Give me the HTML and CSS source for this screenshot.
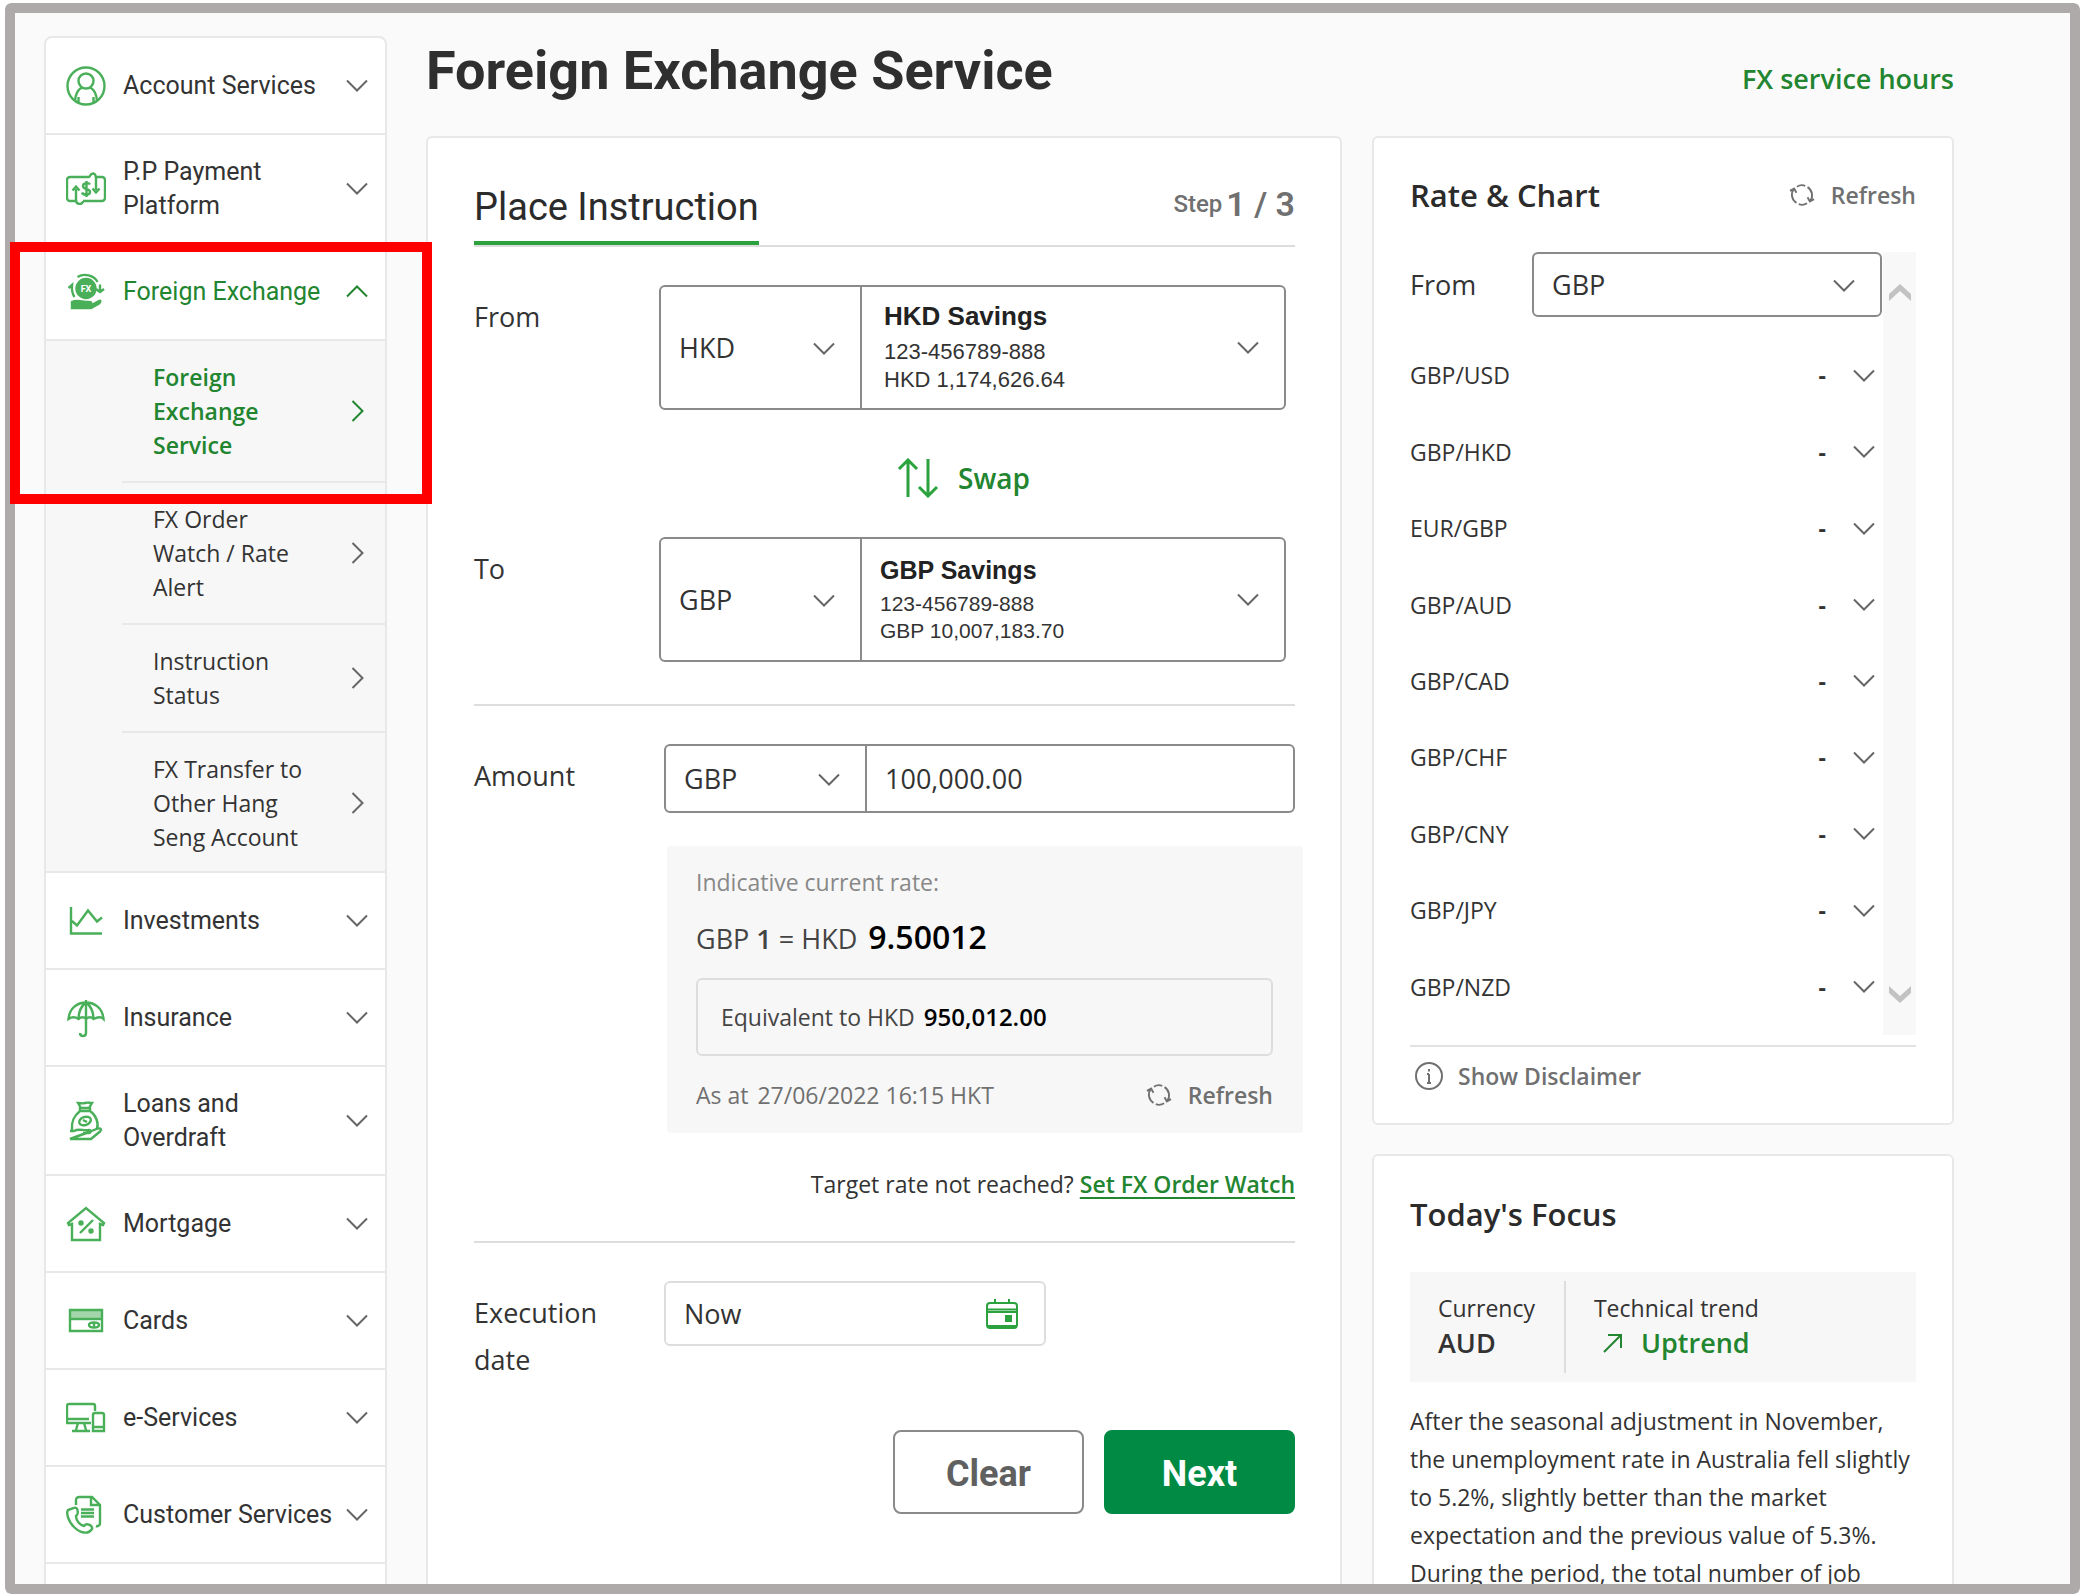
FILE: index.html
```html
<!DOCTYPE html>
<html lang="en">
<head>
<meta charset="utf-8">
<meta name="viewport" content="width=device-width, initial-scale=1">
<title>Foreign Exchange Service</title>
<link rel="stylesheet" href="styles.css">
</head>
<body>
<svg class="sprite" aria-hidden="true">
  <symbol id="down" viewBox="0 0 22 13"><path d="M1 1.5 11 11.5 21 1.5"/></symbol>
  <symbol id="up" viewBox="0 0 22 13"><path d="M1 11.5 11 1.5 21 11.5"/></symbol>
  <symbol id="right" viewBox="0 0 13 22"><path d="M1.500 1 11.500 11 1.500 21"/></symbol>
  <symbol id="refresh" viewBox="0 0 28 26"><path d="M8 21.500A10.500 10.500 0 0 1 5 6.500M8.500 4A10.500 10.500 0 0 1 17.500 3M20 4.500A10.500 10.500 0 0 1 23 19.500M19.500 22A10.500 10.500 0 0 1 10.500 23M1 8.500 5.500 6 8 10.500M27 17.500 22.500 20 20 15.500"/></symbol>
</svg>
<div class="frame">
  <nav class="sidebar" aria-label="Banking services">
    <ul class="menu">
      <li class="menu-item"><a class="menu-link" href="#account">
        <svg class="icon" viewBox="0 0 40 40"><circle cx="20" cy="20" r="18.500"/><circle cx="20" cy="15" r="7.500"/><path d="M9 35C9.500 28 12 23.500 16 21.500M31 35C30.500 28 28 23.500 24 21.500M12.500 37v-6M27.500 37v-6"/></svg>
        <span class="menu-text">Account Services</span><svg class="chev"><use href="#down"/></svg></a></li>
      <li class="menu-item tall"><a class="menu-link" href="#payment">
        <svg class="icon" viewBox="0 0 40 40"><path d="M10 32H4a3 3 0 0 1-3-3V11a3 3 0 0 1 3-3h19c1 0 1-3.500 4-3.500S30 8 30 10v11M17 32h19a3 3 0 0 0 3-3V11a3 3 0 0 0-3-3h-5M10 20v11c0 5 7 5 7 1M6.500 21.500 10 17.500l3.500 4M26.500 19.500 30 23.500l3.500-4M24 15.500c-1-2-7-2-7 1.500 0 4 7 2 7 6 0 3.500-7 3.500-8 .500M20.500 12v16"/></svg>
        <span class="menu-text">P.P Payment Platform</span><svg class="chev"><use href="#down"/></svg></a></li>
      <li class="menu-item group">
        <a class="menu-link active" href="#fx" aria-expanded="true">
        <svg class="icon" viewBox="0 0 40 40"><circle class="solid" cx="20" cy="16.500" r="9.500"/><path d="M11.500 5C18 1 28 3 31.500 10M34 12.500v6M2.500 16 6 13c-.500 4 0 8 2.500 12M30 17l4 3 4-3"/><path class="solid" d="M6 30c5-2.500 10 0 17 0 3 0 3 2 0 2.500l-6 .500 7 1 9-5c2-1 1.500 1 0 2.500L25 36H6z"/><text class="fx-mark" x="20" y="20">FX</text></svg>
        <span class="menu-text">Foreign Exchange</span><svg class="chev"><use href="#up"/></svg></a>
        <ul class="submenu">
          <li><a class="sub-link active" href="#fx-service" aria-current="page"><span>Foreign Exchange Service</span><svg class="chev-r"><use href="#right"/></svg></a></li>
          <li><a class="sub-link" href="#fx-watch"><span>FX Order Watch / Rate Alert</span><svg class="chev-r"><use href="#right"/></svg></a></li>
          <li><a class="sub-link" href="#fx-status"><span>Instruction Status</span><svg class="chev-r"><use href="#right"/></svg></a></li>
          <li><a class="sub-link" href="#fx-transfer"><span>FX Transfer to Other Hang Seng Account</span><svg class="chev-r"><use href="#right"/></svg></a></li>
        </ul>
        <span class="highlight" aria-hidden="true"></span>
      </li>
      <li class="menu-item"><a class="menu-link" href="#investments">
        <svg class="icon" viewBox="0 0 40 40"><path d="M5 6v26.500h31M6 20l5 4.500L22 9.500l9 11 5-4"/></svg>
        <span class="menu-text">Investments</span><svg class="chev"><use href="#down"/></svg></a></li>
      <li class="menu-item"><a class="menu-link" href="#insurance">
        <svg class="icon" viewBox="0 0 40 40"><path d="M2.500 21C4 -1 36 -1 37.500 21c-2-2-6-2-10 0-2-2-5-2-7.500 0-2-2-5-2-7.500 0-3-2-7-2-10 0zM12.500 21c0-7 3-13 7.500-17 4.500 4 7.500 10 7.500 17M20 2v33c0 4-6 4-6 0"/></svg>
        <span class="menu-text">Insurance</span><svg class="chev"><use href="#down"/></svg></a></li>
      <li class="menu-item tall"><a class="menu-link" href="#loans">
        <svg class="icon" viewBox="0 0 40 40"><path d="M15 7l-3-5c3 0 4 1 7 0s4 0 7 0l-3 5M14 7h10v3H14zM14 10C8 15 5 20 6 29M24 10c6 4 9 12 7 18M4 30h4c5-3 9 0 15-1 2 0 2 3 0 3h-6M23 31l9-3.500c3-.500 4 1 2 3L25 38H4z"/><ellipse cx="19" cy="20" rx="6" ry="4" transform="rotate(-20 19 20)"/><path d="M17 19l4 2"/></svg>
        <span class="menu-text">Loans and Overdraft</span><svg class="chev"><use href="#down"/></svg></a></li>
      <li class="menu-item"><a class="menu-link" href="#mortgage">
        <svg class="icon" viewBox="0 0 40 40"><path d="M6 20v16h28V20l3 1 1-2L20 4 2 19l1 2zM14 29l13-13"/><circle class="solid" cx="15" cy="19" r="1.500"/><circle class="solid" cx="25" cy="27" r="1.500"/></svg>
        <span class="menu-text">Mortgage</span><svg class="chev"><use href="#down"/></svg></a></li>
      <li class="menu-item"><a class="menu-link" href="#cards">
        <svg class="icon" viewBox="0 0 40 40"><path d="M4 9h32v21H4z"/><path class="pale" d="M5 10h30v7H5z"/><path d="M5 18h30"/><ellipse cx="28" cy="24" rx="5" ry="2.500"/><path d="M28 22v4"/></svg>
        <span class="menu-text">Cards</span><svg class="chev"><use href="#down"/></svg></a></li>
      <li class="menu-item"><a class="menu-link" href="#eservices">
        <svg class="icon" viewBox="0 0 40 40"><path d="M29 13V8a2 2 0 0 0-2-2H3a2 2 0 0 0-2 2v17h24M1 21h22M12 25l-2 7M18 25l2 7M6 33h18M29 15h7a2 2 0 0 1 2 2v16H27V17a2 2 0 0 1 2-2zM27 29h11"/></svg>
        <span class="menu-text">e-Services</span><svg class="chev"><use href="#down"/></svg></a></li>
      <li class="menu-item"><a class="menu-link" href="#customer">
        <svg class="icon" viewBox="0 0 40 40"><path d="M10 10V5a3 3 0 0 1 3-3h13l8 8v18a3 3 0 0 1-4 3M25 2v8h8M15 14.500h13M15 18h13M15 21.500h13M8 13c4-2 5 6 2 8 0 5 4 9 8 10 3-4 9 0 8 3-4 6-12 4-18-2C2 26 0 18 2 15z"/></svg>
        <span class="menu-text">Customer Services</span><svg class="chev"><use href="#down"/></svg></a></li>
    </ul>
  </nav>

  <div class="content">
    <header class="page-head">
      <h1>Foreign Exchange Service</h1>
      <a class="hours" href="#hours">FX service hours</a>
    </header>
    <div class="columns">
      <main class="card order">
        <div class="tabs">
          <h2 class="tab">Place Instruction</h2>
          <p class="step">Step <strong>1 / 3</strong></p>
        </div>

        <div class="row account">
          <label class="label" for="from-cur">From</label>
          <div class="combo">
            <div class="pick"><select id="from-cur"><option>HKD</option><option>GBP</option></select><svg class="chev"><use href="#down"/></svg></div>
            <button class="acct" type="button" aria-haspopup="listbox">
              <span class="acct-text"><b>HKD Savings</b><span>123-456789-888</span><span>HKD 1,174,626.64</span></span>
              <svg class="chev"><use href="#down"/></svg>
            </button>
          </div>
        </div>

        <button class="swap" type="button">
          <svg viewBox="0 0 42 40"><path d="M11 39V2M2 11l9-9 9 9M31 1v37M22 29l9 9 9-9"/></svg>Swap
        </button>

        <div class="row account">
          <label class="label" for="to-cur">To</label>
          <div class="combo">
            <div class="pick"><select id="to-cur"><option>GBP</option><option>HKD</option></select><svg class="chev"><use href="#down"/></svg></div>
            <button class="acct compact" type="button" aria-haspopup="listbox">
              <span class="acct-text"><b>GBP Savings</b><span>123-456789-888</span><span>GBP 10,007,183.70</span></span>
              <svg class="chev"><use href="#down"/></svg>
            </button>
          </div>
        </div>

        <hr>

        <div class="row">
          <label class="label" for="amount">Amount</label>
          <div class="combo amount">
            <div class="pick"><select aria-label="Amount currency"><option>GBP</option><option>HKD</option></select><svg class="chev"><use href="#down"/></svg></div>
            <input id="amount" type="text" inputmode="decimal" value="100,000.00">
          </div>
        </div>

        <section class="rate">
          <p class="rate-title">Indicative current rate:</p>
          <p class="rate-line">GBP <span class="unit">1</span> = HKD <span class="rate-value">9.50012</span></p>
          <p class="equiv">Equivalent to HKD <span class="equiv-value">950,012.00</span></p>
          <div class="rate-foot">
            <p>As at <time datetime="2022-06-27T16:15">27/06/2022 16:15 HKT</time></p>
            <button class="refresh" type="button"><svg><use href="#refresh"/></svg>Refresh</button>
          </div>
        </section>

        <p class="target">Target rate not reached? <a href="#watch">Set FX Order Watch</a></p>

        <hr>

        <div class="row">
          <label class="label" for="date">Execution date</label>
          <div class="date">
            <input id="date" type="text" value="Now">
            <svg viewBox="0 0 32 30"><rect x="1" y="4" width="30" height="25" rx="3"/><path d="M2 10.500h28M2 13h28M9 0v5M23 0v5M2 27h28"/><rect class="solid" x="20" y="17" width="5" height="5"/></svg>
          </div>
        </div>

        <div class="actions">
          <button class="btn" type="button">Clear</button>
          <button class="btn primary" type="submit">Next</button>
        </div>
      </main>

      <aside class="side">
        <section class="card chart">
          <div class="card-head">
            <h2>Rate &amp; Chart</h2>
            <button class="refresh" type="button"><svg><use href="#refresh"/></svg>Refresh</button>
          </div>
          <div class="scroller">
            <div class="scroll-body">
              <div class="from">
                <label for="base">From</label>
                <div class="pick boxed"><select id="base"><option>GBP</option><option>HKD</option></select><svg class="chev"><use href="#down"/></svg></div>
              </div>
              <table class="pairs">
                <tr><th scope="row">GBP/USD</th><td>-</td><td class="more"><button type="button" aria-label="Show GBP/USD"><svg class="chev"><use href="#down"/></svg></button></td></tr>
                <tr><th scope="row">GBP/HKD</th><td>-</td><td class="more"><button type="button" aria-label="Show GBP/HKD"><svg class="chev"><use href="#down"/></svg></button></td></tr>
                <tr><th scope="row">EUR/GBP</th><td>-</td><td class="more"><button type="button" aria-label="Show EUR/GBP"><svg class="chev"><use href="#down"/></svg></button></td></tr>
                <tr><th scope="row">GBP/AUD</th><td>-</td><td class="more"><button type="button" aria-label="Show GBP/AUD"><svg class="chev"><use href="#down"/></svg></button></td></tr>
                <tr><th scope="row">GBP/CAD</th><td>-</td><td class="more"><button type="button" aria-label="Show GBP/CAD"><svg class="chev"><use href="#down"/></svg></button></td></tr>
                <tr><th scope="row">GBP/CHF</th><td>-</td><td class="more"><button type="button" aria-label="Show GBP/CHF"><svg class="chev"><use href="#down"/></svg></button></td></tr>
                <tr><th scope="row">GBP/CNY</th><td>-</td><td class="more"><button type="button" aria-label="Show GBP/CNY"><svg class="chev"><use href="#down"/></svg></button></td></tr>
                <tr><th scope="row">GBP/JPY</th><td>-</td><td class="more"><button type="button" aria-label="Show GBP/JPY"><svg class="chev"><use href="#down"/></svg></button></td></tr>
                <tr><th scope="row">GBP/NZD</th><td>-</td><td class="more"><button type="button" aria-label="Show GBP/NZD"><svg class="chev"><use href="#down"/></svg></button></td></tr>
              </table>
            </div>
            <div class="track" aria-hidden="true">
              <svg viewBox="0 0 22 18"><path d="M0 17v-7L11 0l11 10v7L11 7z"/></svg>
              <svg viewBox="0 0 22 18"><path d="M0 1v7l11 10L22 8V1L11 11z"/></svg>
            </div>
          </div>
          <button class="disclaimer" type="button">
            <svg viewBox="0 0 28 28"><circle cx="14" cy="14" r="13"/><path d="M14 12v9M12 12h2M12 21h4M14 7v2.500"/></svg>Show Disclaimer
          </button>
        </section>

        <section class="card focus">
          <h2>Today's Focus</h2>
          <dl class="facts">
            <div><dt>Currency</dt><dd>AUD</dd></div>
            <div><dt>Technical trend</dt><dd class="up"><svg viewBox="0 0 20 20"><path d="M1 19 18 2M5 2h13v13"/></svg>Uptrend</dd></div>
          </dl>
          <p>After the seasonal adjustment in November, the unemployment rate in Australia fell slightly to 5.2%, slightly better than the market expectation and the previous value of 5.3%. During the period, the total number of job</p>
        </section>
      </aside>
    </div>
  </div>
</div>
</body>
</html>
```
FILE: styles.css
```css
:root {
  --ink: #333;
  --muted: #707070;
  --green: #22852f;
  --bright: #2ba23d;
  --line: #e8e8e8;
  --field: #8a8a8a;
  --body: "Open Sans", "Noto Sans", sans-serif;
  --display: Roboto, "Liberation Sans", sans-serif;
}

* { box-sizing: border-box; }

body {
  margin: 0;
  padding: 3px 0 1px 5px;
  height: 100vh;
  background: #fff;
  color: var(--ink);
  font: 23px/32px var(--body);
  overflow: hidden;
}

h1, h2, p, ul, dl, dd { margin: 0; padding: 0; }
h2 { font-size: 31px; font-weight: 600; line-height: 40px; color: #2b2b2b; }
ul { list-style: none; }
a { color: inherit; text-decoration: none; }
button, select, input { font: inherit; color: inherit; background: none; border: 0; margin: 0; padding: 0; border-radius: 0; text-align: left; }
button { cursor: pointer; }
svg { fill: none; stroke: currentColor; stroke-width: 2; flex: none; }
hr { margin: 0; border: 0; border-top: 2px solid #ddd; }
.sprite { position: absolute; width: 0; height: 0; }
.chev { width: 22px; height: 13px; color: #666; }
.chev-r { width: 13px; height: 22px; color: #666; }
.solid { fill: currentColor; }

.frame {
  position: relative;
  display: flex;
  gap: 39px;
  height: 100%;
  border-radius: 6px;
  background: #fafafa;
  padding: 33px 126px 0 39px;
  overflow: hidden;
}
/* The border lies over the content so that the highlight can cross it */
.frame::after {
  content: "";
  position: absolute;
  inset: 0;
  z-index: 1;
  border: 10px solid #aeaaaa;
  border-radius: 6px;
  pointer-events: none;
}

/* Sidebar */
.sidebar {
  flex: none;
  width: 343px;
  min-height: 1800px;
  border: 2px solid var(--line);
  border-radius: 8px;
  background: #fff;
}
.menu-item { border-bottom: 2px solid var(--line); }
.menu-link {
  display: flex;
  align-items: center;
  min-height: 95px;
  padding: 0 17px 0 20px;
  font: 25px/34px var(--display);
}
.tall .menu-link { min-height: 107px; }
.menu-text { flex: 1; margin-left: 17px; }
.tall .menu-text { padding-right: 60px; }
.icon { width: 40px; height: 40px; color: var(--bright); opacity: .85; stroke-width: 2.4; }
.pale { fill: currentColor; opacity: .5; stroke: none; }
.fx-mark { fill: #fff; stroke: none; font: 700 9px var(--display); text-anchor: middle; }
.active, .active .chev, .active .chev-r { color: var(--green); }
.group { position: relative; }
.submenu { border-top: 2px solid var(--line); background: #f7f7f7; padding-left: 76px; }
.submenu li + li { border-top: 2px solid var(--line); }
.sub-link {
  display: flex;
  align-items: center;
  justify-content: space-between;
  padding: 19px 21px 19px 31px;
  line-height: 34px;
}
.submenu li:last-child .sub-link { padding-bottom: 17px; }
.sub-link span { width: 160px; }
.sub-link.active { font-weight: 600; }
.highlight {
  position: absolute;
  z-index: 2;
  top: -2px;
  left: -36px;
  right: -47px;
  height: 262px;
  border: 10px solid #f00;
  pointer-events: none;
}

/* Page heading */
.content { flex: 1; min-width: 0; padding-top: 3px; }
.page-head { display: flex; justify-content: space-between; align-items: baseline; margin-bottom: 33px; }
h1 { font: 700 54px/64px var(--display); color: #2f2f2f; }
.hours { font-size: 27px; font-weight: 600; color: var(--green); }

.columns { display: grid; grid-template-columns: minmax(0, 1fr) 582px; gap: 30px; }
.card { border: 2px solid var(--line); border-radius: 6px; background: #fff; }

/* Order form */
.order { padding: 45px 45px 200px 46px; }
.tabs { display: flex; justify-content: space-between; border-bottom: 2px solid #ddd; margin-bottom: 38px; }
.tab { font: 400 38px/48px var(--display); padding-bottom: 10px; border-bottom: 4px solid var(--bright); }
.step { display: flex; align-items: center; gap: 4px; height: 42px; font: 500 24px/40px var(--display); color: var(--muted); }
.step strong { font-size: 34px; font-weight: 600; }
.row { display: grid; grid-template-columns: 190px minmax(0, 1fr); font-size: 27px; }
.account { grid-template-columns: 185px minmax(0, 1fr); padding-right: 9px; }
.label { padding-top: 8px; line-height: 47px; }
.row .label { width: 140px; }
.combo { display: flex; height: 125px; border: 2px solid var(--field); border-radius: 6px; }
.combo.amount { height: 69px; }
.combo input { flex: 1; min-width: 0; padding-left: 18px; }
.pick { position: relative; width: 201px; flex: none; border-right: 2px solid var(--field); }
.pick select { appearance: none; width: 100%; height: 100%; padding-left: 18px; }
.pick .chev { position: absolute; right: 25px; top: 50%; margin-top: -6px; pointer-events: none; }
.acct { display: flex; flex: 1; align-items: center; justify-content: space-between; padding: 0 25px 0 22px; font: 22px/28px "Liberation Sans", Arial, sans-serif; }
.acct-text { display: flex; flex-direction: column; padding-bottom: 4px; }
.acct b { margin-bottom: 4px; font-size: 26px; line-height: 36px; color: #222; }
.acct.compact { padding-left: 18px; font-size: 21px; line-height: 27px; }
.acct.compact b { margin-bottom: 2px; font-size: 25px; }
.swap { display: flex; align-items: center; gap: 19px; margin: 48px auto 39px 423px; height: 40px; font-size: 28px; font-weight: 600; color: var(--green); }
.swap svg { width: 42px; height: 40px; color: var(--bright); stroke-width: 3; }
.account + hr { margin: 42px 0 38px; }

.rate { margin: 33px -8px 35px 193px; padding: 20px 30px 22px 29px; border-radius: 4px; background: #f7f7f7; }
.rate-title { color: #888; }
.rate-line { margin-top: 18px; font-size: 27px; line-height: 46px; color: #444; }
.unit { font-weight: 600; }
.rate-value { margin-left: 4px; font-size: 32px; font-weight: 600; line-height: 32px; color: #000; }
.equiv { display: flex; align-items: center; height: 78px; margin: 16px 0 23px; padding-left: 23px; border: 2px solid #ddd; border-radius: 6px; color: #444; white-space: pre; }
.equiv-value { margin-left: 3px; font-size: 24px; font-weight: 600; color: #000; }
.rate-foot { display: flex; justify-content: space-between; color: var(--muted); }
.rate-foot time { margin-left: 3px; }
.refresh { display: flex; align-items: center; gap: 16px; font-weight: 600; color: var(--muted); }
.refresh svg { width: 26px; height: 24px; }
.target { margin-bottom: 41px; text-align: right; }
.target a { color: var(--green); font-weight: 600; text-decoration: underline; text-underline-offset: 4px; text-decoration-thickness: 2px; }
.target + hr { margin-bottom: 38px; }
.date { display: flex; align-items: center; justify-content: space-between; width: 382px; height: 65px; padding: 0 26px 0 18px; border: 2px solid #ddd; border-radius: 6px; }
.date input { width: 200px; height: 100%; }
.date svg { width: 32px; height: 30px; color: var(--bright); }
.actions { display: flex; justify-content: flex-end; gap: 20px; margin-top: 47px; }
.btn { width: 191px; height: 84px; padding-top: 4px; border: 2px solid var(--field); border-radius: 8px; font: 700 36px/44px var(--display); text-align: center; color: #606060; }
.btn.primary { background: #008a43; border-color: #008a43; color: #fff; }

/* Right column */
.side { display: flex; flex-direction: column; gap: 29px; }
.chart { padding: 37px 36px 31px; }
.card-head { display: flex; justify-content: space-between; align-items: center; margin-bottom: 37px; }
.scroller { display: flex; gap: 1px; padding-bottom: 10px; border-bottom: 2px solid #e2e2e2; margin-bottom: 13px; }
.scroll-body { flex: 1; padding-bottom: 10px; }
.from { display: flex; align-items: center; justify-content: space-between; font-size: 27px; margin-bottom: 20px; }
.boxed { width: 350px; height: 65px; border: 2px solid var(--field); border-radius: 6px; }
.track { display: flex; flex-direction: column; justify-content: space-between; align-items: center; width: 33px; padding: 32px 0; background: #f8f8f8; }
.track svg { width: 22px; height: 18px; fill: #c2c2c2; stroke: none; }
.pairs { width: 100%; height: 688px; border-collapse: collapse; }
.pairs th { padding: 0; text-align: left; font-weight: 400; }
.pairs td { padding: 0; text-align: right; font-weight: 700; }
.pairs .more { width: 56px; padding-right: 7px; }
.pairs button { display: block; margin-left: auto; }
.pairs .chev { display: block; }
.disclaimer { display: flex; align-items: center; gap: 15px; margin-left: 5px; height: 32px; font-weight: 600; color: var(--muted); }
.disclaimer svg { width: 28px; height: 28px; }

.focus { padding: 38px 36px 100px; }
.facts { display: flex; margin: 38px 0 20px; height: 110px; padding: 9px 0; background: #f7f7f7; }
.facts div { padding: 10px 29px 0 28px; }
.facts div + div { border-left: 2px solid #ddd; }
.facts dt { line-height: 34px; }
.facts dd { display: flex; align-items: center; font-size: 27px; line-height: 36px; font-weight: 600; }
.facts .up { gap: 18px; padding-left: 9px; color: var(--green); }
.facts svg { width: 20px; height: 20px; }
.focus p { line-height: 38px; }
```
